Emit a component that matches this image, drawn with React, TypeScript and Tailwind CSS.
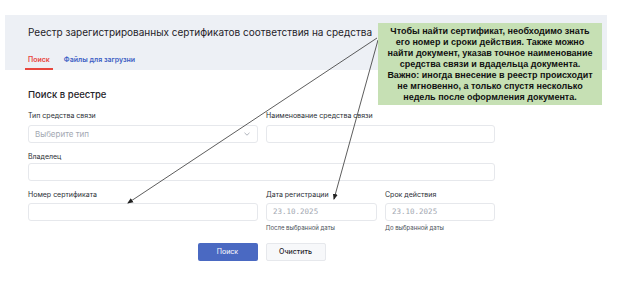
import React from 'react';

function Field({ label, width, children }: { label: string; width: string; children: React.ReactNode }) {
  return (
    <div className={width}>
      <div className="text-[7px] leading-[9px] text-[#2b2f36]">{label}</div>
      {children}
    </div>
  );
}

function App() {
  return (
    <div className="relative w-[632px] h-[285px] bg-white overflow-hidden font-['Inter',sans-serif]">
      {/* шапка */}
      <div className="ml-[5px] mt-[15px] w-[602px] h-[55px] bg-[#edf0f5] pl-[23px] pt-[10px]">
        <div className="text-[10px] leading-[14px] text-[#1f2329]">
          Реестр зарегистрированных сертификатов соответствия на средства
        </div>
        <div className="flex gap-[8px] mt-[15.5px] ml-[-3px] text-[7px] leading-[9px] font-semibold">
          <div className="px-[3px] pb-[4.5px] border-b-2 border-[#e8463d] text-[#e8463d]">Поиск</div>
          <div className="px-[3px] pb-[4.5px] border-b-2 border-transparent text-[#3d5fc4]">Файлы для загрузни</div>
        </div>
      </div>

      {/* форма поиска */}
      <div className="pl-[28px]">
        <div className="mt-[19px] text-[9.5px] leading-[12px] font-medium text-[#1f2329]">Поиск в реестре</div>

        <div className="flex gap-2 mt-[10px]">
          <Field label="Тип средства связи" width="w-[230px]">
            <div className="mt-[5px] h-[18px] border border-[#e6e8ec] rounded-[3px] flex items-center justify-between px-[6px]">
              <span className="text-[8px] text-[#a3a8b2]">Выберите тип</span>
              <svg width="6" height="4" viewBox="0 0 6 4" className="mr-[1px]">
                <path d="M0.5 0.8 L3 3.2 L5.5 0.8" fill="none" stroke="#9aa0aa" strokeWidth="0.8" />
              </svg>
            </div>
          </Field>
          <Field label="Наименование средства связи" width="w-[229px]">
            <div className="mt-[5px] h-[18px] border border-[#e6e8ec] rounded-[3px]" />
          </Field>
        </div>

        <div className="mt-[9px]">
          <Field label="Владелец" width="w-[467px]">
            <div className="mt-[2px] h-[18px] border border-[#e6e8ec] rounded-[3px]" />
          </Field>
        </div>

        <div className="flex gap-2 mt-[9px]">
          <Field label="Номер сертификата" width="w-[230px]">
            <div className="mt-[4px] h-[18px] border border-[#e6e8ec] rounded-[3px]" />
          </Field>
          <Field label="Дата регистрации" width="w-[111px]">
            <div className="mt-[4px] h-[18px] border border-[#e6e8ec] rounded-[3px] flex items-center px-[6px] font-['DejaVu_Sans_Mono',monospace] text-[7.5px] text-[#a3a8b2]">
              23.10.2025
            </div>
            <div className="mt-[3px] text-[6px] leading-[8px] text-[#4a4f57]">После выбранной даты</div>
          </Field>
          <Field label="Срок действия" width="w-[110px]">
            <div className="mt-[4px] h-[18px] border border-[#e6e8ec] rounded-[3px] flex items-center px-[6px] font-['DejaVu_Sans_Mono',monospace] text-[7.5px] text-[#a3a8b2]">
              23.10.2025
            </div>
            <div className="mt-[3px] text-[6px] leading-[8px] text-[#4a4f57]">До выбранной даты</div>
          </Field>
        </div>

        <div className="w-[467px] flex justify-center gap-2 mt-[11px]">
          <button className="w-[60px] h-[18px] rounded-[2px] bg-[#4a69c2] text-[7px] text-white">Поиск</button>
          <button className="w-[60px] h-[18px] rounded-[2px] bg-[#f7f8fa] border border-[#e6e8ec] text-[7px] font-medium text-[#1f2329]">
            Очистить
          </button>
        </div>
      </div>

      {/* стрелки */}
      <svg className="absolute inset-0 pointer-events-none" width="632" height="285">
        <defs>
          <marker id="head" markerWidth="6" markerHeight="6" refX="5" refY="3" orient="auto" markerUnits="userSpaceOnUse">
            <path d="M0 0.5 L6 3 L0 5.5 Z" fill="#222" />
          </marker>
        </defs>
        <line x1="377" y1="38" x2="128" y2="203" stroke="#333" strokeWidth="0.8" markerEnd="url(#head)" />
        <line x1="378" y1="40" x2="334" y2="199" stroke="#333" strokeWidth="0.8" markerEnd="url(#head)" />
      </svg>

      {/* подсказка */}
      <div className="absolute left-[378px] top-[23px] w-[224px] h-[82px] bg-[#c6e0b4] pt-[2.5px] text-center font-['Liberation_Sans',Arial,sans-serif] font-bold text-[9px] leading-[11px] text-[#111]">
        Чтобы найти сертификат, необходимо знать
        <br />
        его номер и сроки действия. Также можно
        <br />
        найти документ, указав точное наименование
        <br />
        средства связи и вдадельца документа.
        <br />
        Важно: иногда внесение в реестр происходит
        <br />
        не мгновенно, а только спустя несколько
        <br />
        недель после оформления документа.
      </div>
    </div>
  );
}

export default App;
